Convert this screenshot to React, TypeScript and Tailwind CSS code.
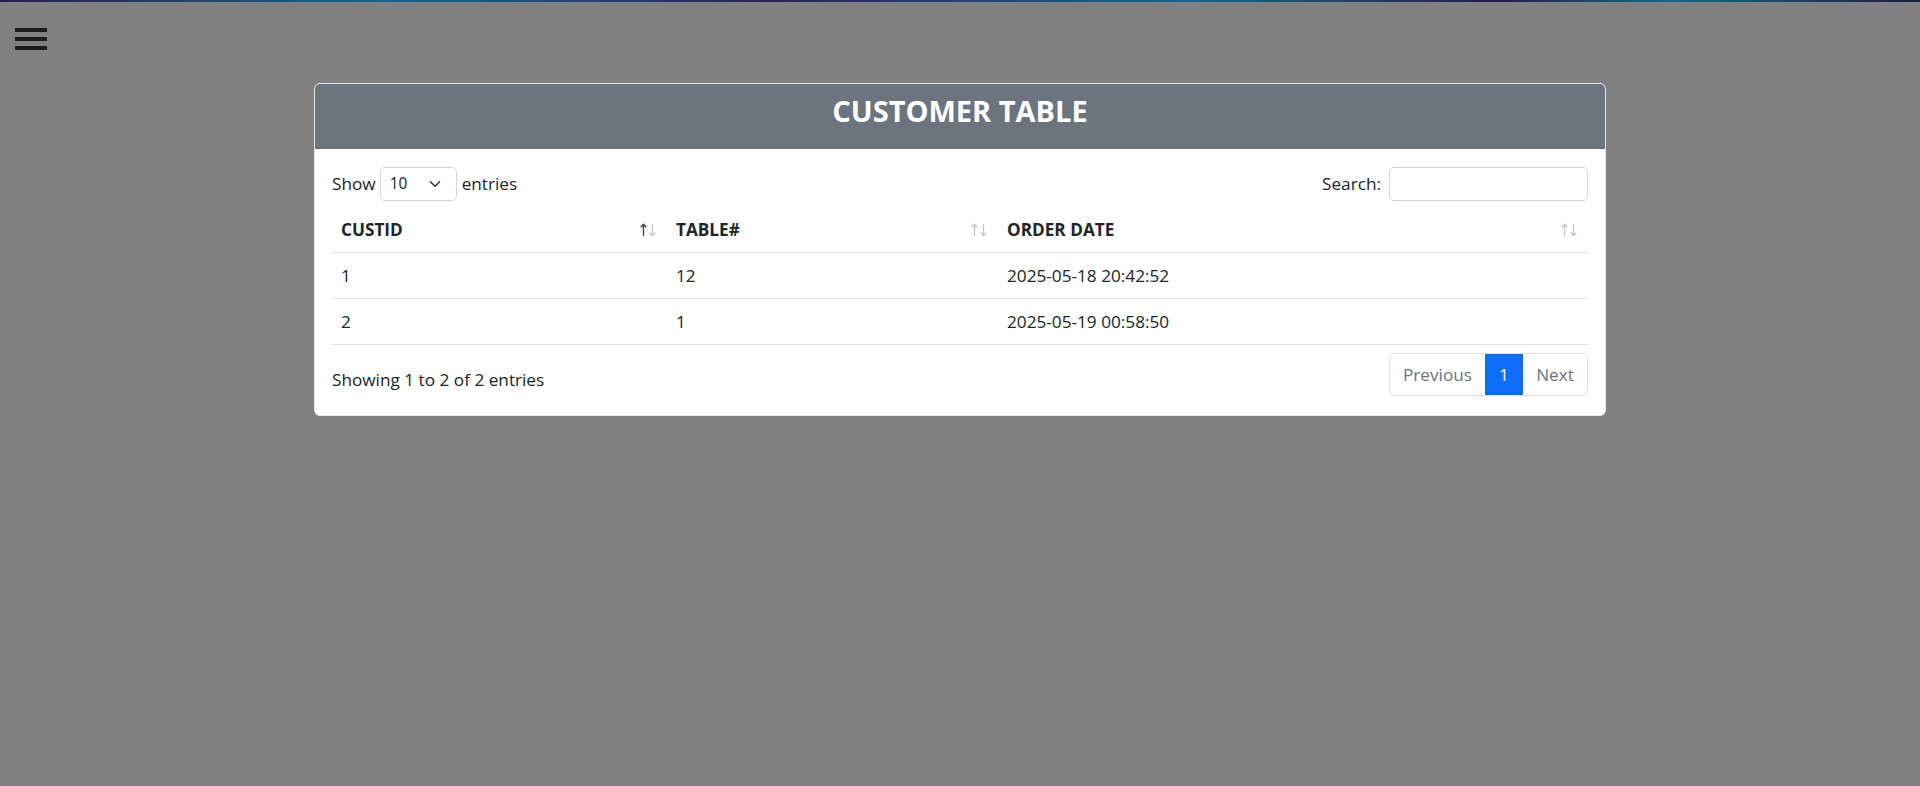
import React from "react";

const rows = [
  { id: "1", table: "12", date: "2025-05-18 20:42:52" },
  { id: "2", table: "1", date: "2025-05-19 00:58:50" },
];

function SortIcon({ active }: { active?: boolean }) {
  const up = active ? "#3a3f44" : "#c4c6c9";
  const down = "#c4c6c9";
  return (
    <svg width="17" height="14" viewBox="0 0 17 14" fill="none" className="shrink-0">
      <path d="M3.5 13V1.5M0.8 4.2L3.5 1.3L6.2 4.2" stroke={up} strokeWidth="1.3" />
      <path d="M12.5 1V12.5M9.8 9.8L12.5 12.7L15.2 9.8" stroke={down} strokeWidth="1.3" />
    </svg>
  );
}

export default function App() {
  return (
    <div
      className="min-h-[786px] w-full bg-[#808080] text-[#212529]"
      style={{ fontFamily: '"Open Sans", "Noto Sans", sans-serif' }}
    >
      <div className="h-[2px] w-full bg-[linear-gradient(90deg,#2a1b5c_0%,#0f6a8c_20%,#2b2062_40%,#0f6a8c_62%,#261a58_78%,#0f6a8c_87%,#1e1b4b_100%)]" />
      <div className="px-[15px] pt-[26px]">
        <div className="flex w-[32px] flex-col gap-[5px]">
          <div className="h-[4px] w-[32px] bg-[#1c1c1c]" />
          <div className="h-[4px] w-[32px] bg-[#1c1c1c]" />
          <div className="h-[4px] w-[32px] bg-[#1c1c1c]" />
        </div>
      </div>

      <div className="mx-auto mt-[33px] w-[1292px] overflow-hidden rounded-[6px] border border-[#e4e6e9] bg-white">
        <div className="h-[65px] bg-[#6c757d] pt-[9px] text-center">
          <h2 className="text-[29px] font-bold leading-[36px] text-white">CUSTOMER TABLE</h2>
        </div>

        <div className="px-[17px] pb-[19px] pt-[18px] text-[17.2px]">
          <div className="flex h-[34px] items-center justify-between">
            <div className="flex items-center">
              <span className="leading-[26px]">Show</span>
              <div className="ml-[4px] flex h-[34px] w-[77px] items-center justify-between rounded-[5px] border border-[#d3d7dc] pl-[9px] pr-[15px] text-[15.4px]">
                <span>10</span>
                <svg width="12" height="8" viewBox="0 0 12 8" fill="none">
                  <path d="M1.5 1.8L6 6.2L10.5 1.8" stroke="#343a40" strokeWidth="1.6" strokeLinecap="round" strokeLinejoin="round" />
                </svg>
              </div>
              <span className="ml-[5px] leading-[26px]">entries</span>
            </div>
            <div className="flex items-center">
              <span className="leading-[26px]">Search:</span>
              <div className="ml-[8px] h-[34px] w-[199px] rounded-[5px] border border-[#d3d7dc]" />
            </div>
          </div>

          <div className="mt-[6px]">
            <div className="grid h-[46px] grid-cols-[335px_331px_590px] border-b border-[#dee2e6] font-bold">
              <div className="flex items-center justify-between pl-[9px] pr-[10px]">
                <span>CUSTID</span>
                <SortIcon active />
              </div>
              <div className="flex items-center justify-between pl-[9px] pr-[10px]">
                <span>TABLE#</span>
                <SortIcon />
              </div>
              <div className="flex items-center justify-between pl-[9px] pr-[10px]">
                <span>ORDER DATE</span>
                <SortIcon />
              </div>
            </div>
            {rows.map((r) => (
              <div
                key={r.id}
                className="grid h-[46px] grid-cols-[335px_331px_590px] border-b border-[#dee2e6]"
              >
                <div className="flex items-center pl-[9px]">{r.id}</div>
                <div className="flex items-center pl-[9px]">{r.table}</div>
                <div className="flex items-center pl-[9px]">{r.date}</div>
              </div>
            ))}
          </div>

          <div className="mt-[8px] flex items-start justify-between">
            <div className="pt-[14px] leading-[26px]">Showing 1 to 2 of 2 entries</div>
            <div className="flex h-[43px] overflow-hidden rounded-[5px] border border-[#dee2e6]">
              <div className="flex w-[95px] items-center justify-center text-[#6c757d]">Previous</div>
              <div className="flex w-[38px] items-center justify-center bg-[#0d6efd] text-white">1</div>
              <div className="flex w-[64px] items-center justify-center text-[#6c757d]">Next</div>
            </div>
          </div>
        </div>
      </div>
    </div>
  );
}
